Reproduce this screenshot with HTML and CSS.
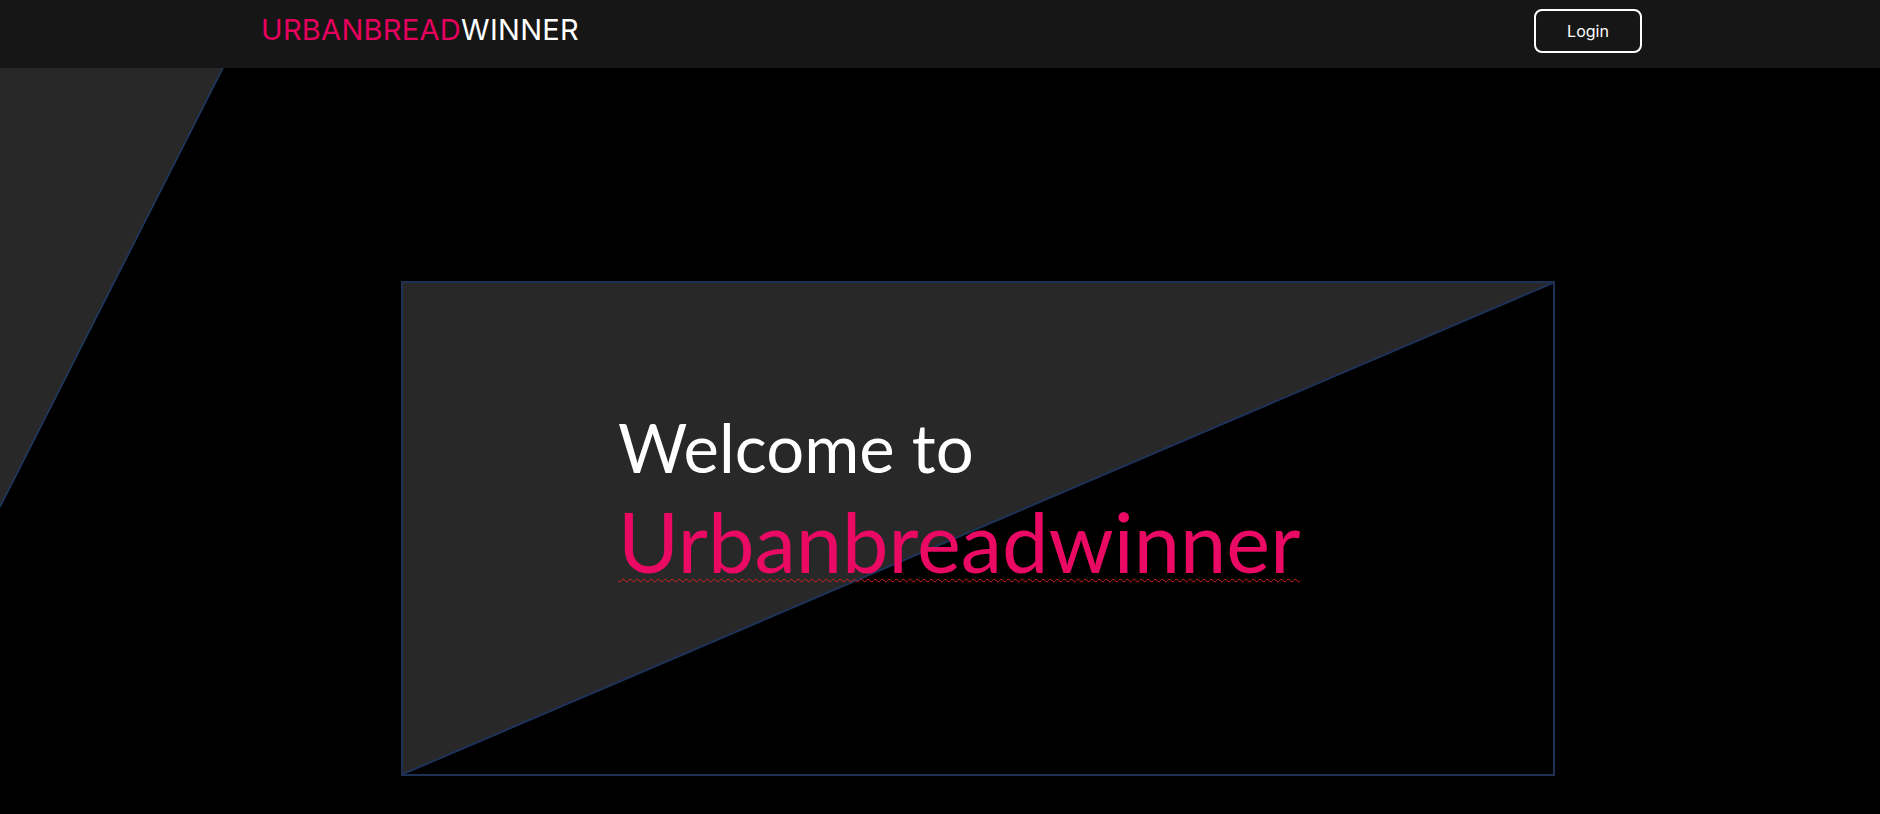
FILE: index.html
```html
<!DOCTYPE html>
<html lang="en">
<head>
<meta charset="utf-8">
<title>Urbanbreadwinner</title>
<link rel="stylesheet" href="styles.css">
</head>
<body>
<nav class="nav">
  <a class="logo" href="#"><span class="pink">URBANBREAD</span><span class="white">WINNER</span></a>
  <button class="login">Login</button>
</nav>
<main class="main">
  <svg class="side-shape" width="230" height="446" viewBox="0 0 230 446">
    <polygon points="0,0 223,0 0,439" fill="#282828"/>
    <line x1="223" y1="0" x2="0" y2="439" stroke="#1e3a66" stroke-width="1.5"/>
  </svg>
  <section class="hero">
    <svg class="hero-bg" viewBox="0 0 1150 491" preserveAspectRatio="none">
      <polygon points="0,0 1150,0 0,491" fill="#282828"/>
      <line x1="0" y1="491" x2="1152" y2="-1" stroke="#1e3258" stroke-width="2"/>
    </svg>
    <div class="hero-text">
      <div class="welcome">Welcome to</div>
      <div class="brand">Urbanbreadwinner</div>
    </div>
  </section>
</main>
</body>
</html>
```
FILE: styles.css
```css
* { box-sizing: border-box; }
html, body { margin: 0; padding: 0; }
body {
  background: #000;
  width: 1880px;
  height: 814px;
  overflow: hidden;
}
.nav {
  height: 68px;
  background: #161616;
  display: flex;
  align-items: center;
  justify-content: space-between;
  padding: 0 238px 0 261px;
}
.logo {
  font-family: Inter, "Open Sans", sans-serif;
  font-size: 29px;
  font-weight: 400;
  letter-spacing: 0.3px;
  text-decoration: none;
  padding-bottom: 10px;
}
.pink { color: #e6005e; }
.white { color: #fff; }
.login {
  width: 108px;
  height: 44px;
  margin-bottom: 6px;
  border: 2px solid #fff;
  border-radius: 8px;
  background: #161616;
  color: #fff;
  font-family: Inter, "Open Sans", sans-serif;
  font-size: 16px;
  padding: 0;
}
.main {
  position: relative;
  height: 746px;
  padding: 213px 0 0 401px;
}
.side-shape {
  position: absolute;
  left: 0;
  top: 0;
}
.hero {
  position: relative;
  width: 1154px;
  height: 495px;
  border: 2px solid #1e3054;
}
.hero-bg {
  position: absolute;
  left: 0;
  top: 0;
  width: 100%;
  height: 100%;
}
.hero-text {
  position: relative;
  padding: 124px 0 0 215px;
  font-family: Lato, "Open Sans", sans-serif;
}
.welcome {
  color: #fff;
  font-size: 67px;
  line-height: 80px;
}
.brand {
  color: #ea0a64;
  font-size: 83px;
  line-height: 108px;
  text-decoration: underline wavy #d32020;
  text-decoration-thickness: 1px;
  text-underline-offset: 5px;
}
```
